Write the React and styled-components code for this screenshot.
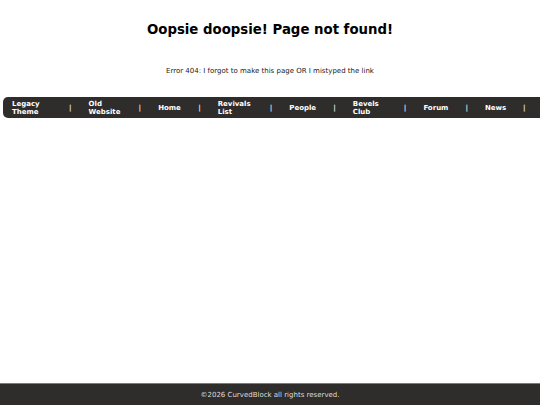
import React from "react";
import styled, { createGlobalStyle } from "styled-components";

const GlobalStyle = createGlobalStyle`
  html, body {
    margin: 0;
    padding: 0;
    background: #ffffff;
    font-family: "DejaVu Sans", Verdana, sans-serif;
    overflow: hidden;
  }
`;

const Page = styled.div`
  width: 540px;
  height: 405px;
  display: flex;
  flex-direction: column;
`;

const Main = styled.main`
  flex: 1;
  display: flex;
  flex-direction: column;
`;

const Title = styled.h1`
  margin: 21px 0 0;
  text-align: center;
  font-size: 13.3px;
  font-weight: bold;
  color: #000;
  line-height: 17px;
`;

const Message = styled.p`
  margin: 28px 0 0;
  text-align: center;
  font-size: 7px;
  line-height: 10px;
  color: #222;
`;

const NavBar = styled.nav`
  margin: 21px 0 0 3px;
  height: 21px;
  background: #2f2c2c;
  border-radius: 5px 0 0 5px;
  display: flex;
  align-items: center;
  padding-left: 9px;
  width: calc(100% - 3px);
  box-sizing: border-box;
  overflow: hidden;
`;

const NavItem = styled.a`
  flex: 0 0 auto;
  width: ${(p) => p.$w}px;
  color: #ffffff;
  font-size: 7px;
  font-weight: bold;
  line-height: 8px;
  text-decoration: none;
`;

const Sep = styled.span`
  flex: 0 0 auto;
  color: #e8e8e8;
  font-size: 7px;
  font-weight: bold;
  padding: 0 17px;
`;

const Footer = styled.footer`
  height: 21px;
  background: #2f2c2c;
  border-top: 1px solid #7a7a7a;
  color: #dddddd;
  font-size: 7px;
  display: flex;
  align-items: center;
  justify-content: center;
`;

const links = [
  { label: ["Legacy", "Theme"], w: 40 },
  { label: ["Old", "Website"], w: 33 },
  { label: ["Home"], w: 23 },
  { label: ["Revivals", "List"], w: 35 },
  { label: ["People"], w: 27 },
  { label: ["Bevels", "Club"], w: 34 },
  { label: ["Forum"], w: 25 },
  { label: ["News"], w: 21 },
];

export default function App() {
  return (
    <>
      <GlobalStyle />
      <Page>
        <Main>
          <Title>Oopsie doopsie! Page not found!</Title>
          <Message>
            Error 404: I forgot to make this page OR I mistyped the link
          </Message>
          <NavBar>
            {links.map((l) => (
              <React.Fragment key={l.label.join(" ")}>
                <NavItem href="#" $w={l.w}>
                  {l.label.map((t, i) => (
                    <React.Fragment key={t}>
                      {i > 0 && <br />}
                      {t}
                    </React.Fragment>
                  ))}
                </NavItem>
                <Sep>|</Sep>
              </React.Fragment>
            ))}
          </NavBar>
        </Main>
        <Footer>©2026 CurvedBlock all rights reserved.</Footer>
      </Page>
    </>
  );
}
